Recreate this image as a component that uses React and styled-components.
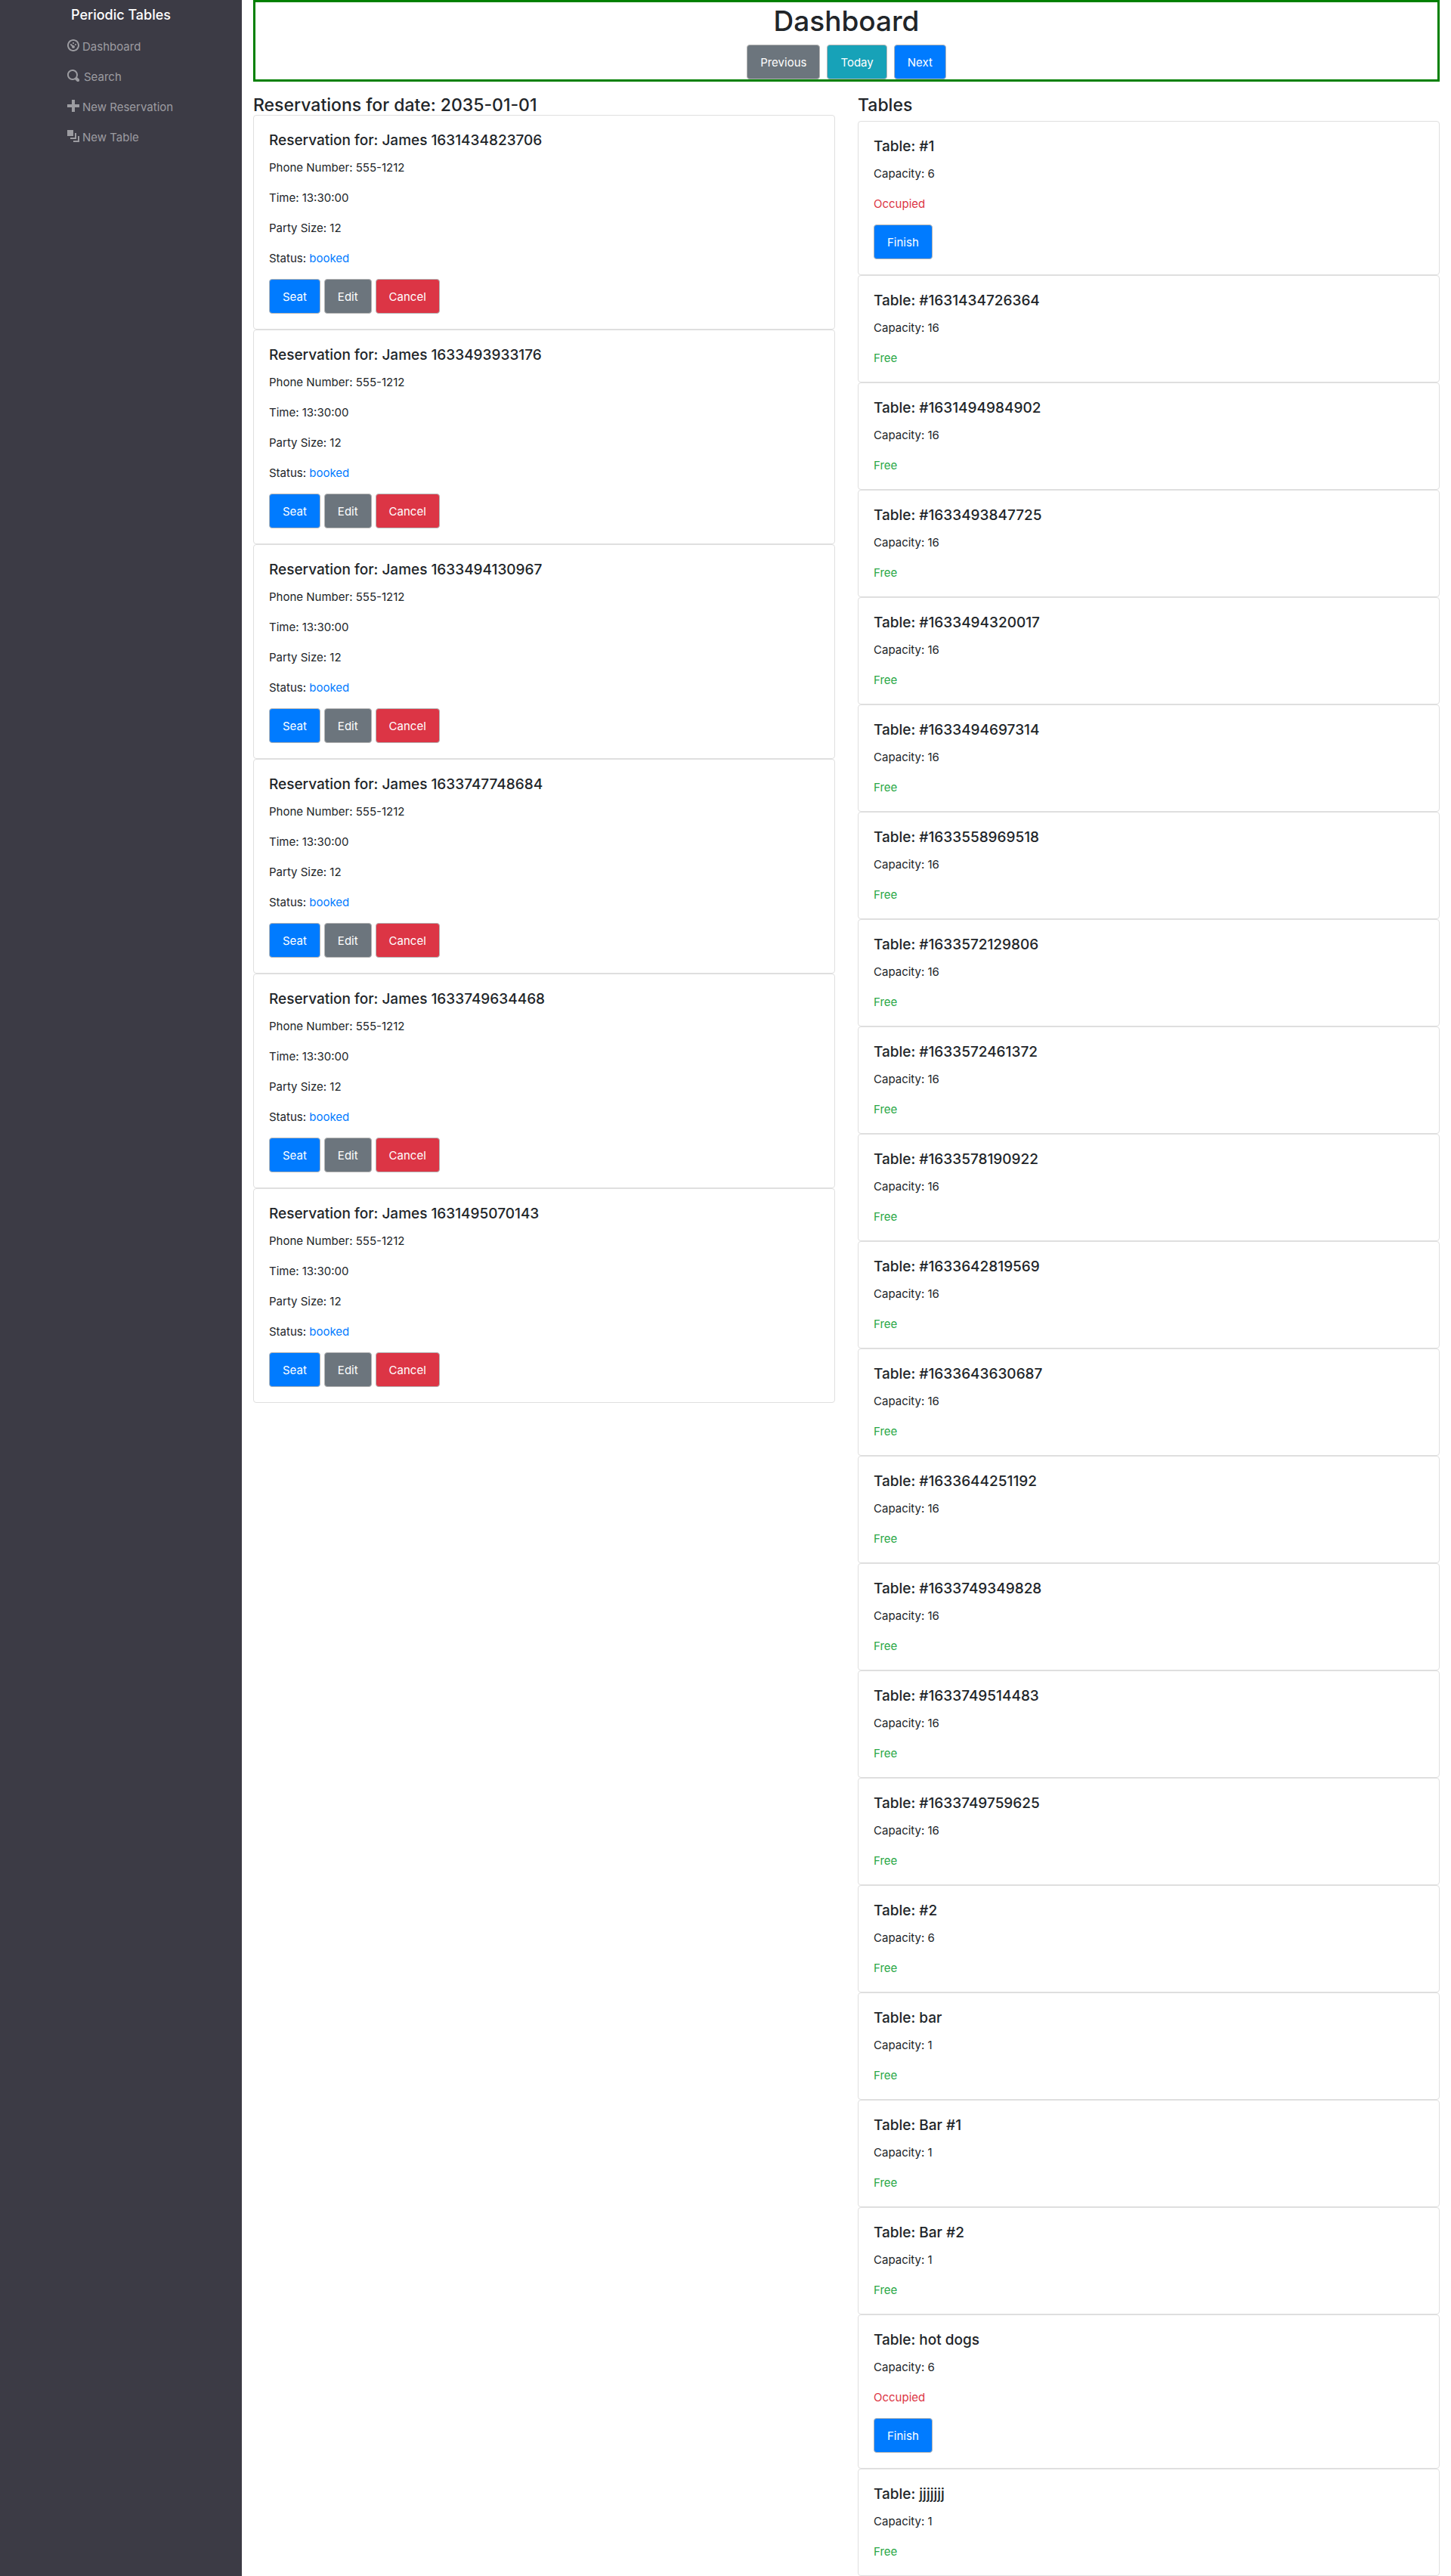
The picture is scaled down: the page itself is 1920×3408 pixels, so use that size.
import React from "react";
import styled, { createGlobalStyle } from "styled-components";

const GlobalStyle = createGlobalStyle`
  *, *::before, *::after { box-sizing: border-box; }
  body {
    margin: 0;
    background: #fff;
    color: #212529;
    font-family: Inter, "Liberation Sans", sans-serif;
    font-size: 15px;
    line-height: 24px;
  }
  h1, h4, h5, p, ul { margin: 0; padding: 0; }
`;

const Page = styled.div`
  display: grid;
  grid-template-columns: 1fr 5fr;
  min-height: 100vh;
`;

const Sidebar = styled.nav`
  display: flex;
  flex-direction: column;
  align-items: center;
  background: #3c3b45;
`;

const Brand = styled.a`
  padding: 5px 0;
  color: #fff;
  font-size: 18px;
  font-weight: 500;
  line-height: 30px;
  text-decoration: none;
`;

const NavList = styled.ul`
  width: 174px;
  list-style: none;
`;

const NavLink = styled.a`
  display: flex;
  align-items: center;
  gap: ${(p) => (p.$wide ? 6 : 4)}px;
  height: 40px;
  padding: 0 16px;
  color: #9c9ca1;
  text-decoration: none;
`;

const NavLabel = styled.span`
  padding-top: 3px;
`;

const NavIcon = styled.svg`
  width: 16px;
  height: 16px;
  fill: currentColor;
`;

const Main = styled.main`
  padding: 0 15px;
  min-width: 0;
`;

const Header = styled.header`
  display: flex;
  flex-direction: column;
  align-items: center;
  gap: 8px;
  border: 3px solid #008000;
`;

const Title = styled.h1`
  padding-top: 2px;
  font-size: 37px;
  font-weight: 500;
  line-height: 46px;
`;

const ButtonRow = styled.div`
  display: flex;
  gap: ${(p) => p.$gap}px;
`;

const tones = {
  primary: "#007bff",
  secondary: "#6c757d",
  info: "#17a2b8",
  danger: "#dc3545",
};

const Button = styled.button`
  height: 46px;
  padding: 1px 17px 0;
  border: 1px solid #b5b5b5;
  border-radius: 4px;
  background: ${(p) => tones[p.$tone]};
  color: #fff;
  font: inherit;
  cursor: pointer;
`;

const Columns = styled.div`
  display: grid;
  grid-template-columns: 1fr 1fr;
  align-items: start;
  gap: 30px;
  padding-top: 16px;
`;

const SectionTitle = styled.h4`
  padding-top: 2px;
  font-size: 23px;
  font-weight: 500;
  line-height: 26px;
  margin-bottom: ${(p) => (p.$spaced ? 8 : 0)}px;
`;

const Card = styled.article`
  display: flex;
  flex-direction: column;
  align-items: flex-start;
  gap: 16px;
  padding: 20px;
  border: 1px solid #dfdfdf;
  border-radius: 4px;
`;

const CardTitle = styled.h5`
  margin-bottom: -4px;
  padding-top: 2px;
  font-size: 19px;
  font-weight: 500;
  line-height: 22px;
`;

const Line = styled.p`
  padding-top: 2px;
  line-height: 22px;
`;

const Status = styled.span`
  color: ${(p) => p.$color};
`;

const icons = {
  dashboard:
    "M4 0c-2.2 0-4 1.8-4 4s1.8 4 4 4 4-1.8 4-4-1.8-4-4-4zm0 1c1.66 0 3 1.34 3 3s-1.34 3-3 3-3-1.34-3-3 1.34-3 3-3zm0 1c-.28 0-.5.22-.5.5s.22.5.5.5.5-.22.5-.5-.22-.5-.5-.5zm-1.66 1a.5.5 0 0 0-.19.84l.91.91c-.02.08-.06.16-.06.25 0 .55.45 1 1 1s1-.45 1-1-.45-1-1-1c-.09 0-.17.04-.25.06l-.91-.91a.5.5 0 0 0-.44-.16.5.5 0 0 0-.06 0zm3.16 0c-.28 0-.5.22-.5.5s.22.5.5.5.5-.22.5-.5-.22-.5-.5-.5z",
  search:
    "M3.5 0c-1.93 0-3.5 1.57-3.5 3.5s1.57 3.5 3.5 3.5c.59 0 1.17-.14 1.66-.41a1 1 0 0 0 .13.13l1 1a1.02 1.02 0 1 0 1.44-1.44l-1-1a1 1 0 0 0-.16-.13c.27-.49.44-1.06.44-1.66 0-1.93-1.55-3.5-3.5-3.5zm0 1c1.39 0 2.5 1.1 2.5 2.5 0 .66-.24 1.27-.66 1.72-.01.01-.02.02-.03.03a1 1 0 0 0-.13.13c-.44.4-1.04.63-1.69.63-1.39 0-2.5-1.1-2.5-2.5s1.1-2.5 2.5-2.5z",
  plus: "M3 0v3h-3v2h3v3h2v-3h3v-2h-3v-3h-2z",
  layers: "M0 0v4h4v-4h-4zm5 2v3h-3v1h4v-4h-1zm2 2v3h-3v1h4v-4h-1z",
};

const links = [
  { icon: "dashboard", label: "Dashboard" },
  { icon: "search", label: "Search", wide: true },
  { icon: "plus", label: "New Reservation" },
  { icon: "layers", label: "New Table" },
];

const guests = [
  "1631434823706",
  "1633493933176",
  "1633494130967",
  "1633747748684",
  "1633749634468",
  "1631495070143",
];

const tables = [
  { name: "#1", capacity: 6, occupied: true },
  ...[
    "1631434726364",
    "1631494984902",
    "1633493847725",
    "1633494320017",
    "1633494697314",
    "1633558969518",
    "1633572129806",
    "1633572461372",
    "1633578190922",
    "1633642819569",
    "1633643630687",
    "1633644251192",
    "1633749349828",
    "1633749514483",
    "1633749759625",
  ].map((id) => ({ name: `#${id}`, capacity: 16 })),
  { name: "#2", capacity: 6 },
  { name: "bar", capacity: 1 },
  { name: "Bar #1", capacity: 1 },
  { name: "Bar #2", capacity: 1 },
  { name: "hot dogs", capacity: 6, occupied: true },
  { name: "jjjjjjj", capacity: 1 },
];

function ReservationCard({ guest }) {
  return (
    <Card>
      <CardTitle>Reservation for: James {guest}</CardTitle>
      <Line>Phone Number: 555-1212</Line>
      <Line>Time: 13:30:00</Line>
      <Line>Party Size: 12</Line>
      <Line>
        Status: <Status $color="#007bff">booked</Status>
      </Line>
      <ButtonRow $gap={5}>
        <Button type="button" $tone="primary">Seat</Button>
        <Button type="button" $tone="secondary">Edit</Button>
        <Button type="button" $tone="danger">Cancel</Button>
      </ButtonRow>
    </Card>
  );
}

function TableCard({ name, capacity, occupied }) {
  return (
    <Card>
      <CardTitle>Table: {name}</CardTitle>
      <Line>Capacity: {capacity}</Line>
      <Line>
        <Status $color={occupied ? "#dc3545" : "#28a745"}>
          {occupied ? "Occupied" : "Free"}
        </Status>
      </Line>
      {occupied && <Button type="button" $tone="primary">Finish</Button>}
    </Card>
  );
}

export default function App() {
  return (
    <Page>
      <GlobalStyle />
      <Sidebar>
        <Brand href="#">Periodic Tables</Brand>
        <NavList>
          {links.map(({ icon, label, wide }) => (
            <li key={label}>
              <NavLink href="#" $wide={wide}>
                <NavIcon viewBox="0 0 8 8" aria-hidden="true">
                  <path d={icons[icon]} />
                </NavIcon>
                <NavLabel>{label}</NavLabel>
              </NavLink>
            </li>
          ))}
        </NavList>
      </Sidebar>
      <Main>
        <Header>
          <Title>Dashboard</Title>
          <ButtonRow $gap={9}>
            <Button type="button" $tone="secondary">Previous</Button>
            <Button type="button" $tone="info">Today</Button>
            <Button type="button" $tone="primary">Next</Button>
          </ButtonRow>
        </Header>
        <Columns>
          <section>
            <SectionTitle>Reservations for date: 2035-01-01</SectionTitle>
            {guests.map((guest) => (
              <ReservationCard key={guest} guest={guest} />
            ))}
          </section>
          <section>
            <SectionTitle $spaced>Tables</SectionTitle>
            {tables.map((table) => (
              <TableCard key={table.name} {...table} />
            ))}
          </section>
        </Columns>
      </Main>
    </Page>
  );
}
